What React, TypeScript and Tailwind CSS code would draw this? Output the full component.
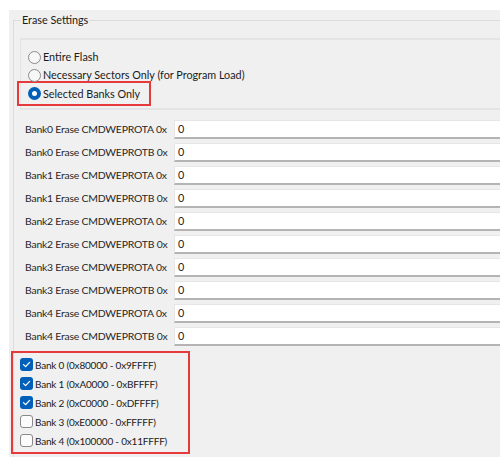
import React from "react";

const font = { fontFamily: 'Lato, "Open Sans", sans-serif' };

function Radio({ checked }: { checked?: boolean }) {
  return checked ? (
    <span className="w-[13px] h-[13px] rounded-full bg-[#005fb8] flex items-center justify-center shrink-0">
      <span className="w-[5px] h-[5px] rounded-full bg-white" />
    </span>
  ) : (
    <span className="w-[13px] h-[13px] rounded-full border border-[#8a8a8a] bg-[#f7f7f7] shrink-0" />
  );
}

function Check({ checked }: { checked?: boolean }) {
  return checked ? (
    <span className="w-[13px] h-[13px] rounded-[3px] bg-[#005fb8] flex items-center justify-center shrink-0">
      <svg width="9" height="9" viewBox="0 0 9 9">
        <path d="M1.5 4.6 L3.6 6.6 L7.6 2.4" fill="none" stroke="white" strokeWidth="1.3" strokeLinecap="round" strokeLinejoin="round" />
      </svg>
    </span>
  ) : (
    <span className="w-[13px] h-[13px] rounded-[3px] border border-[#8a8a8a] bg-[#fbfbfb] shrink-0" />
  );
}

const rows = [
  "Bank0 Erase CMDWEPROTA 0x",
  "Bank0 Erase CMDWEPROTB 0x",
  "Bank1 Erase CMDWEPROTA 0x",
  "Bank1 Erase CMDWEPROTB 0x",
  "Bank2 Erase CMDWEPROTA 0x",
  "Bank2 Erase CMDWEPROTB 0x",
  "Bank3 Erase CMDWEPROTA 0x",
  "Bank3 Erase CMDWEPROTB 0x",
  "Bank4 Erase CMDWEPROTA 0x",
  "Bank4 Erase CMDWEPROTB 0x",
];

const banks = [
  { t: "Bank 0 (0x80000 - 0x9FFFF)", c: true },
  { t: "Bank 1 (0xA0000 - 0xBFFFF)", c: true },
  { t: "Bank 2 (0xC0000 - 0xDFFFF)", c: true },
  { t: "Bank 3 (0xE0000 - 0xFFFFF)", c: false },
  { t: "Bank 4 (0x100000 - 0x11FFFF)", c: false },
];

export default function App() {
  return (
    <div className="w-[500px] h-[457px] bg-white overflow-hidden pt-[10px] pl-[9px] text-[10.8px] text-[#1b1b1b] whitespace-nowrap" style={font}>
      <div className="w-[491px] h-[447px] bg-[#f0f0f0] pt-[10px] pl-[4px] overflow-hidden">
        <div className="relative w-[600px] h-[500px] border-l border-t border-[#dcdcdc]">
          <span className="absolute left-[7px] top-[-9px] px-[1px] bg-[#f0f0f0] leading-[16px] text-[#1b1b1b]">Erase Settings</span>

          <div className="ml-[6px] mt-[17px] w-[580px] h-[72px] border-t-2 border-b-2 border-l border-[#e4e4e4] pt-[8px]">
            <div className="h-[18px] flex items-center gap-[1px] pl-[7px]">
              <Radio />
              <span className="leading-[18px] ml-[1px]">Entire Flash</span>
            </div>
            <div className="h-[18px] flex items-center gap-[1px] pl-[7px]">
              <Radio />
              <span className="leading-[18px] ml-[1px]">Necessary Sectors Only (for Program Load)</span>
            </div>
            <div className="ml-[-4px] mt-[-3px] w-[134px] h-[25px] border-2 border-[#e5393b] flex items-center pl-[9px] gap-[1px]">
              <Radio checked />
              <span className="leading-[18px] ml-[1px]">Selected Banks Only</span>
            </div>
          </div>

          <div className="mt-[10px] flex flex-col gap-[4px]">
            {rows.map((r) => (
              <div key={r} className="flex items-center h-[19px]">
                <span className="w-[160px] pl-[11px] text-[#262626] text-[10.4px] tracking-[-0.2px]">{r}</span>
                <div className="w-[340px] h-[19px] bg-white border border-[#e6e6e6] border-b-2 border-b-[#b4b4b4] flex items-center pl-[3px] leading-[16px]">
                  0
                </div>
              </div>
            ))}
          </div>

          <div className="mt-[5px] ml-[-3px] w-[179px] border-2 border-[#e5393b] pl-[7px] pt-[2px] pb-[2px] text-[10px] tracking-[-0.2px]">
            {banks.map((b) => (
              <div key={b.t} className="h-[19px] flex items-center gap-[2px]">
                <Check checked={b.c} />
                <span className="leading-[18px]">{b.t}</span>
              </div>
            ))}
          </div>
        </div>
      </div>
    </div>
  );
}
